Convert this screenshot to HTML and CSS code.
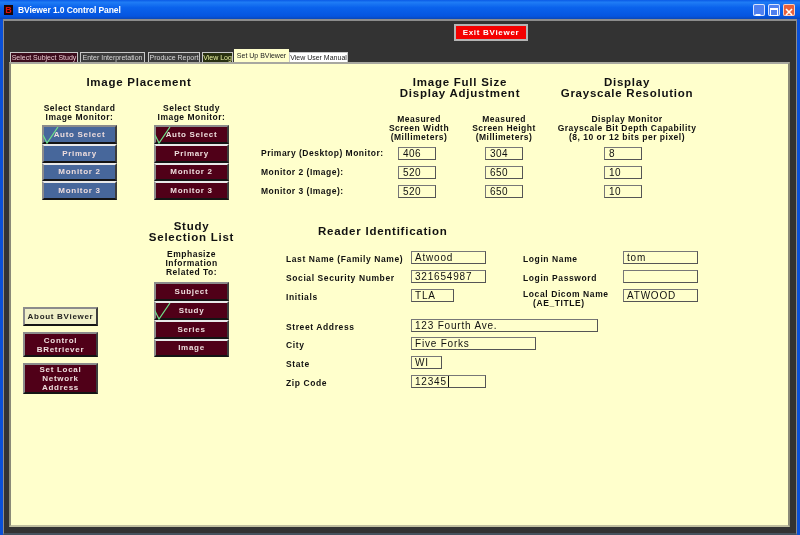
FILE: index.html
```html
<!DOCTYPE html>
<html lang="en">
<head>
    <meta charset="UTF-8">
    <title>BViewer 1.0 Control Panel</title>
    <link rel="stylesheet" href="styles.css">
</head>
<body>
<div class="window">
    <div class="titlebar">
        <div class="app-icon">B</div>
        <div class="app-title">BViewer 1.0 Control Panel</div>
        <div class="win-btn win-min"><svg width="12" height="12" viewBox="0 0 12 12"><rect x="2.5" y="8" width="5" height="2" fill="#fff"/></svg></div>
        <div class="win-btn win-max"><svg width="12" height="12" viewBox="0 0 12 12"><rect x="2.5" y="2.5" width="7" height="7" fill="none" stroke="#fff"/><rect x="2.5" y="2.5" width="7" height="1.5" fill="#fff"/></svg></div>
        <div class="win-btn win-close"><svg width="12" height="12" viewBox="0 0 12 12"><path d="M3 3l6 6M9 3l-6 6" stroke="#fff" stroke-width="1.6"/></svg></div>
    </div>
    <div class="client">
        <div class="toolbar">
            <div class="exit-btn">Exit BViewer</div>
        </div>
        <div class="tabs">
            <div class="tab tab-subject">Select Subject Study</div>
            <div class="tab tab-gray">Enter Interpretation</div>
            <div class="tab tab-gray">Produce Report</div>
            <div class="tab tab-log">View Log</div>
            <div class="tab tab-active">Set Up BViewer</div>
            <div class="tab tab-manual">View User Manual</div>
        </div>
        <div class="panel">
            <div class="upper">
                <div class="placement">
                    <h2 class="placement-title">Image Placement</h2>
                    <div class="monitor-groups">
                        <div class="group">
                            <div class="sub">Select Standard<br>Image Monitor:</div>
                            <div class="stack">
                                <div class="btn btn-blue">Auto Select
                                    <svg class="check" width="18" height="18" viewBox="0 0 18 18"><path d="M0 8l4 8L15 0" fill="none" stroke="#6fe08a" stroke-width="1.2"/></svg>
                                </div>
                                <div class="btn btn-blue">Primary</div>
                                <div class="btn btn-blue">Monitor 2</div>
                                <div class="btn btn-blue">Monitor 3</div>
                            </div>
                        </div>
                        <div class="group">
                            <div class="sub">Select Study<br>Image Monitor:</div>
                            <div class="stack">
                                <div class="btn">Auto Select
                                    <svg class="check" width="18" height="18" viewBox="0 0 18 18"><path d="M0 8l4 8L15 0" fill="none" stroke="#6fe08a" stroke-width="1.2"/></svg>
                                </div>
                                <div class="btn">Primary</div>
                                <div class="btn">Monitor 2</div>
                                <div class="btn">Monitor 3</div>
                            </div>
                        </div>
                    </div>
                </div>
                <div class="measure">
                    <h2 class="full-size">Image Full Size<br>Display Adjustment</h2>
                    <h2 class="grayscale-title">Display<br>Grayscale Resolution</h2>

                    <div></div>
                    <div class="sub sub-width">Measured<br>Screen Width<br>(Millimeters)</div>
                    <div class="sub">Measured<br>Screen Height<br>(Millimeters)</div>
                    <div class="sub">Display Monitor<br>Grayscale Bit Depth Capability<br>(8, 10 or 12 bits per pixel)</div>

                    <div class="row-label">Primary (Desktop) Monitor:</div>
                    <div class="field field-num">406</div>
                    <div class="field field-num">304</div>
                    <div class="field field-num field-bits">8</div>

                    <div class="row-label">Monitor 2 (Image):</div>
                    <div class="field field-num">520</div>
                    <div class="field field-num">650</div>
                    <div class="field field-num field-bits">10</div>

                    <div class="row-label">Monitor 3 (Image):</div>
                    <div class="field field-num">520</div>
                    <div class="field field-num">650</div>
                    <div class="field field-num field-bits">10</div>
                </div>
            </div>
            <div class="lower">
                <div class="side-buttons">
                    <div class="btn btn-cream">About BViewer</div>
                    <div class="btn btn-control">Control<br>BRetriever</div>
                    <div class="btn btn-tall">Set Local<br>Network<br>Address</div>
                </div>
                <div class="study">
                    <h2>Study<br>Selection List</h2>
                    <div class="sub study-sub">Emphasize<br>Information<br>Related To:</div>
                    <div class="stack">
                        <div class="btn">Subject</div>
                        <div class="btn">Study
                            <svg class="check" width="18" height="18" viewBox="0 0 18 18"><path d="M0 8l4 8L15 0" fill="none" stroke="#6fe08a" stroke-width="1.2"/></svg>
                        </div>
                        <div class="btn">Series</div>
                        <div class="btn">Image</div>
                    </div>
                </div>
                <div class="reader">
                    <h2 class="reader-title">Reader Identification</h2>
                    <div class="id-grid">
                        <div class="label">Last Name (Family Name)</div>
                        <div class="field field-text">Atwood</div>
                        <div class="label">Login Name</div>
                        <div class="field field-text">tom</div>

                        <div class="label">Social Security Number</div>
                        <div class="field field-text">321654987</div>
                        <div class="label">Login Password</div>
                        <div class="field field-text"></div>

                        <div class="label">Initials</div>
                        <div class="field field-text field-initials">TLA</div>
                        <div class="label label-dicom">Local Dicom Name<br><span class="ae-title">(AE_TITLE)</span></div>
                        <div class="field field-text">ATWOOD</div>
                    </div>
                    <div class="address-grid">
                        <div class="label">Street Address</div>
                        <div class="field field-text field-street">123 Fourth Ave.</div>
                        <div class="label">City</div>
                        <div class="field field-text field-city">Five Forks</div>
                        <div class="label">State</div>
                        <div class="field field-text field-state">WI</div>
                        <div class="label">Zip Code</div>
                        <div class="field field-text"><span class="caret">12345</span></div>
                    </div>
                </div>
            </div>
        </div>
    </div>
</div>
</body>
</html>
```

FILE: styles.css
```css
body {
    margin: 0;
    background-color: #0a50d8;
    font-family: "Liberation Sans", Arial, sans-serif;
    overflow: hidden;
}
h2 {
    margin: 0;
    font-size: 11.5px;
    line-height: 11px;
    font-weight: bold;
    letter-spacing: 0.75px;
    color: #111111;
    text-align: center;
}
.window {
    width: 800px;
    height: 535px;
    display: flex;
    flex-direction: column;
    filter: blur(0.35px);
}
.titlebar {
    height: 19px;
    display: flex;
    align-items: center;
    padding: 0 5px 0 4px;
    background: linear-gradient(to bottom, #0a5ae6 0%, #1f7cf5 12%, #0a62ec 40%, #0555e0 85%, #0a48b8 100%);
}
.app-icon {
    width: 9px;
    height: 10px;
    background-color: #1a0606;
    color: #e01010;
    font-size: 9px;
    line-height: 10px;
    font-weight: bold;
    text-align: center;
}
.app-title {
    flex: 1;
    margin-left: 5px;
    color: #ffffff;
    font-size: 8.5px;
    font-weight: bold;
    letter-spacing: -0.1px;
}
.win-btn {
    width: 12px;
    height: 12px;
    margin-left: 3px;
    border-radius: 2px;
    box-shadow: inset 0 0 0 1px #d8e4fc;
    background-color: #4f80f0;
}
.win-close {
    background-color: #e8603c;
    box-shadow: inset 0 0 0 1px #f8d0c0;
}
.client {
    flex: 1;
    margin: 0 3px;
    padding: 0 6px 6px 5px;
    display: flex;
    flex-direction: column;
    background-color: #333333;
    border: 1px solid #8c8c8c;
    border-top-width: 2px;
    border-bottom: 2px solid #46525e;
}
.toolbar {
    height: 28px;
    padding: 3px 0 0 445px;
    box-sizing: border-box;
}
.exit-btn {
    width: 74px;
    height: 17px;
    box-sizing: border-box;
    background-color: #f40000;
    border: 2px solid #b4b4b4;
    color: #ffffff;
    font-size: 8px;
    line-height: 13px;
    font-weight: bold;
    letter-spacing: 0.7px;
    text-align: center;
}
.tabs {
    display: flex;
    align-items: flex-end;
    gap: 2px;
    padding-left: 1px;
}
.tab {
    height: 9px;
    width: 66px;
    border: 1px solid #c8c8c8;
    border-bottom: none;
    font-size: 7px;
    line-height: 9px;
    white-space: nowrap;
    text-align: center;
    color: #d8d8d8;
}
.tab-subject {
    background-color: #3c0c1c;
    color: #e8c8d0;
}
.tab-gray {
    width: 63px;
    background-color: #3c3c3c;
}
.tab-gray + .tab-gray {
    width: 50px;
    margin-left: 1px;
}
.tab-log {
    width: 29px;
    background-color: #283010;
    color: #e8f0a0;
}
.tab-active {
    width: 55px;
    height: 13px;
    margin-left: -1px;
    background-color: #ffffcc;
    color: #222222;
    border: none;
    line-height: 13px;
}
.tab-manual {
    width: 57px;
    margin-left: -2px;
    background-color: #ffffff;
    color: #222222;
}
.panel {
    flex: 1;
    background-color: #ffffcc;
    border: 2px solid #8a8a78;
    border-bottom-color: #c0bfa0;
    border-top-color: #a8a8a0;
}
.upper {
    display: flex;
    padding-top: 13px;
}
.placement {
    margin-left: 31px;
    width: 187px;
}
.placement-title {
    padding-left: 7px;
    margin-bottom: 16px;
}
.monitor-groups {
    display: flex;
    gap: 37px;
}
.group {
    width: 75px;
}
.sub {
    font-size: 8.5px;
    line-height: 9px;
    font-weight: bold;
    letter-spacing: 0.5px;
    color: #111111;
    text-align: center;
    white-space: nowrap;
}
.group .sub {
    margin-bottom: 3px;
}
.sub-width {
    padding-left: 4px;
}
.stack {
    display: flex;
    flex-direction: column;
    width: 75px;
}
.btn {
    position: relative;
    box-sizing: border-box;
    display: flex;
    align-items: center;
    justify-content: center;
    height: 18.75px;
    border: 2px solid;
    border-color: #8c8c8c #3c3c3c #141414 #8c8c8c;
    background-color: #500018;
    color: #eedddd;
    font-size: 8px;
    line-height: 9px;
    font-weight: bold;
    letter-spacing: 0.7px;
    text-align: center;
}
.stack .btn + .btn {
    border-top-color: #e8e8e8;
}
.btn-blue {
    background-color: #47679b;
}
.btn-cream {
    background-color: #f0f0c8;
    color: #222222;
}
.btn-control {
    height: 25px;
}
.btn-tall {
    height: 31px;
}
.check {
    position: absolute;
    left: -1px;
    top: 0;
}
.measure {
    margin-left: 32px;
    display: grid;
    grid-template-columns: 123px 66px 108px 138px;
    grid-template-rows: 38px 32px;
    grid-auto-rows: 18.75px;
    justify-items: center;
}
.full-size {
    grid-column: 2 / 4;
    padding-right: 22px;
}
.grayscale-title {
    grid-column: 4;
    white-space: nowrap;
}
.row-label {
    justify-self: start;
    font-size: 8.5px;
    line-height: 13px;
    font-weight: bold;
    letter-spacing: 0.5px;
    color: #111111;
    white-space: nowrap;
}
.field {
    box-sizing: border-box;
    height: 13px;
    background-color: #ffffcc;
    border: 1px solid;
    border-color: #777777 #555555 #555555 #777777;
    font-size: 10px;
    line-height: 11px;
    letter-spacing: 0.5px;
    color: #111111;
    white-space: nowrap;
    overflow: hidden;
}
.field-num {
    width: 38px;
    padding-left: 4px;
}
.field-bits {
    margin-right: 8px;
}
.field-text {
    width: 75px;
    padding-left: 3px;
    letter-spacing: 0.8px;
}
.field-initials {
    width: 43px;
}
.field-street {
    width: 187px;
}
.field-city {
    width: 125px;
}
.field-state {
    width: 31px;
}
.caret {
    display: inline-block;
    padding-right: 1px;
    border-right: 1px solid #111111;
}
.lower {
    display: flex;
    margin-top: 18px;
}
.side-buttons {
    margin: 86px 0 0 12px;
    width: 75px;
    display: flex;
    flex-direction: column;
    gap: 6px;
}
.study {
    margin-left: 48px;
    width: 91px;
    display: flex;
    flex-direction: column;
    align-items: center;
}
.study h2 {
    white-space: nowrap;
}
.study-sub {
    margin: 7px 0 5px;
}
.reader {
    margin-left: 49px;
    padding-top: 5px;
}
.reader-title {
    padding-left: 32px;
    margin-bottom: 14px;
    text-align: left;
}
.id-grid {
    display: grid;
    grid-template-columns: 125px 112px 100px 75px;
    grid-auto-rows: 18.75px;
}
.address-grid {
    margin-top: 11px;
    display: grid;
    grid-template-columns: 125px auto;
    grid-auto-rows: 18.75px;
    justify-items: start;
}
.label {
    padding-top: 4px;
    font-size: 8.5px;
    line-height: 9px;
    font-weight: bold;
    letter-spacing: 0.6px;
    color: #111111;
    white-space: nowrap;
}
.label-dicom {
    padding-top: 1px;
}
.ae-title {
    padding-left: 10px;
}
```
